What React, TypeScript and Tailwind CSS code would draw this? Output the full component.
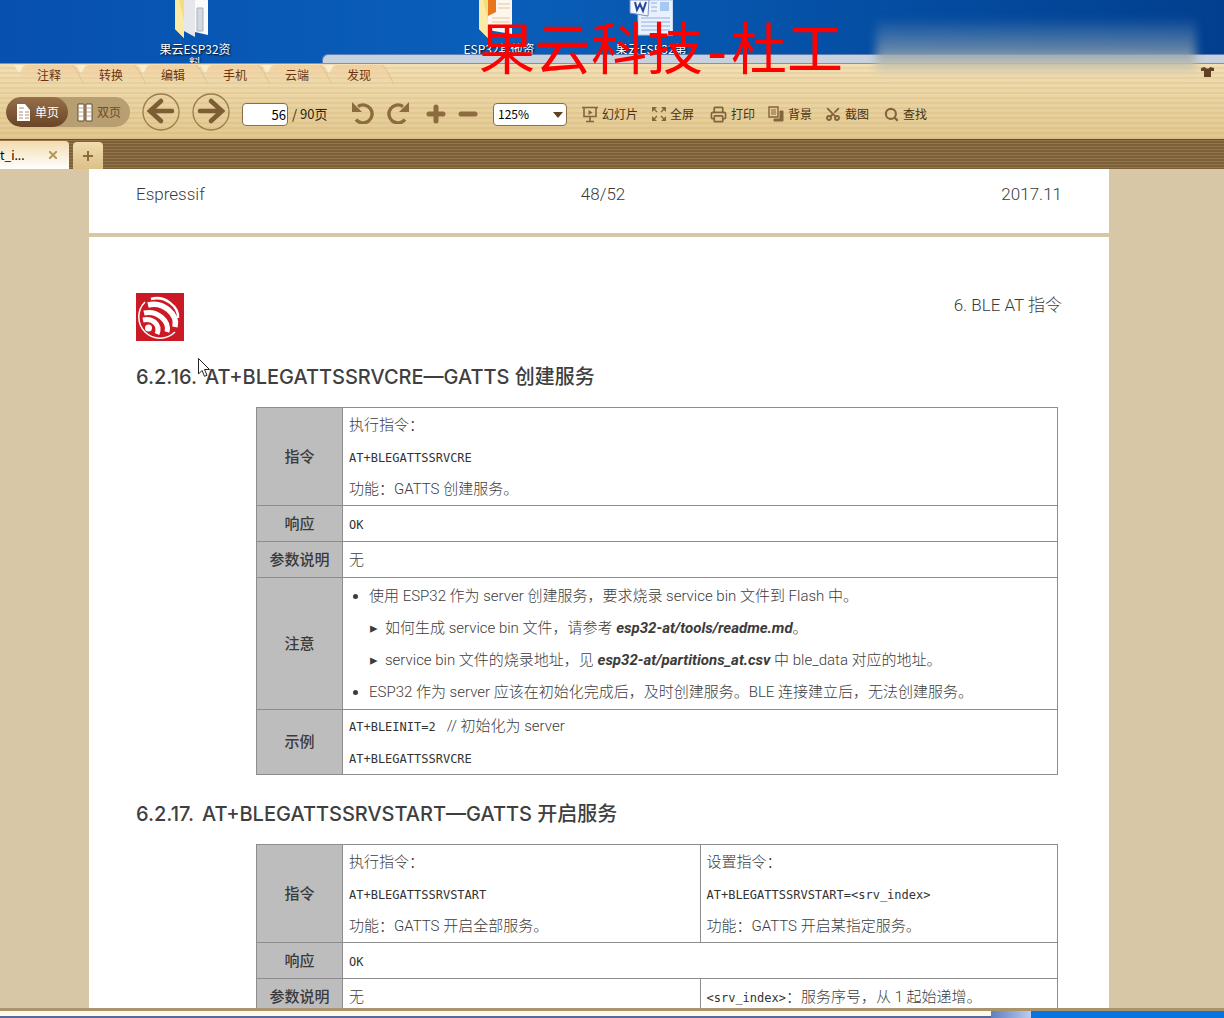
import { Printer, Scissors, Search, Shirt } from "lucide-react";
import type { ReactNode } from "react";

const menuTabs = ["注释", "转换", "编辑", "手机", "云端", "发现"];

interface ToolButtonProps {
  label: string;
  width: string;
  children: ReactNode;
}

function ToolButton({ label, width, children }: ToolButtonProps) {
  return (
    <button className={`flex shrink-0 items-center gap-1 whitespace-nowrap ${width}`}>
      {children}
      {label}
    </button>
  );
}

function MenuTab({ label }: { label: string }) {
  return (
    <button className="relative flex h-[22px] w-[62px] shrink-0 items-center justify-center text-[#6b3410]">
      <svg viewBox="0 0 74 20" className="absolute top-0 -left-1 h-5 w-[74px]">
        <defs>
          <linearGradient id="tab" x1="0" y1="0" x2="0" y2="1">
            <stop offset="0" stopColor="#f3cfa0" />
            <stop offset="1" stopColor="#edd3a2" stopOpacity="0" />
          </linearGradient>
        </defs>
        <path d="M4 20C7 12 6 6 12 1H58C64 6 66 14 70 20Z" fill="url(#tab)" />
        <path d="M58 1C64 6 66 14 70 20" fill="none" stroke="#dcc08c" />
        <path d="M0 1H10L5 9Z" fill="#f9edcf" />
      </svg>
      <span className="relative">{label}</span>
    </button>
  );
}

function Folder({ slides }: { slides?: boolean }) {
  return (
    <svg viewBox="0 0 44 38" className="h-[38px] w-11 shrink-0">
      <path d="M2 0H11V38L2 29Z" fill="#f5dc7c" />
      <path d="M2 0H6L11 20V38L2 29Z" fill="#fbeaa6" />
      {slides ? (
        <>
          <path d="M11 0H35V34L11 30Z" fill="#fbf7ef" />
          <path d="M11 0H19V12L11 16Z" fill="#e8761c" />
          <path d="M21 4H33M21 8H33M15 18H33M15 22H33M15 26H33" stroke="#e9c49c" />
        </>
      ) : (
        <>
          <path d="M11 0H22V37L11 31Z" fill="#e6e7ea" />
          <path d="M22 0H35V35L22 32Z" fill="#fafafa" />
          <path d="M24 8H30V31H24Z" fill="#d3d7de" stroke="#a9b0bd" />
        </>
      )}
    </svg>
  );
}

function WordDoc() {
  return (
    <svg viewBox="0 0 44 38" className="h-[38px] w-11 shrink-0">
      <path d="M9 0H44V35H9Z" fill="#e9f1fc" stroke="#a8c4ec" />
      <path d="M31 2H40V11H31Z" fill="#a9c8f1" />
      <path d="M12 18H41M12 22H41M12 26H41M12 30H41M22 3H28M22 7H28M22 11H28" stroke="#8fb0e0" />
      <path d="M1 0H20L19 16L1 13Z" fill="#f5f7fd" stroke="#7a8fc4" />
      <path d="M6 2L8 10L11 4L14 11L17 2" fill="none" stroke="#25479b" strokeWidth="2" />
    </svg>
  );
}

function DesktopIcon({ className, icon, children }: { className: string; icon: ReactNode; children: ReactNode }) {
  return (
    <div className={`absolute top-0 flex w-24 flex-col items-center ${className}`}>
      {icon}
      <span className="mt-1 text-center text-xs leading-[14px] whitespace-nowrap text-white [text-shadow:1px_1px_2px_#000]">
        {children}
      </span>
    </div>
  );
}

function Desktop() {
  return (
    <div className="relative h-[63px] shrink-0 overflow-hidden bg-linear-to-r from-[#0750b0] via-[#0a5fba] via-40% to-[#023f8f]">
      <DesktopIcon className="left-[147px]" icon={<Folder />}>
        果云ESP32资
        <br />料
      </DesktopIcon>
      <DesktopIcon className="left-[451px]" icon={<Folder slides />}>
        ESP32其他资
      </DesktopIcon>
      <DesktopIcon className="left-[603px]" icon={<WordDoc />}>
        果云ESP32第
      </DesktopIcon>
      <div className="absolute right-0 bottom-0 left-[322px] h-[9px] rounded-tl-md border-t border-l border-[#5f7fae] bg-[#c8d2df]" />
    </div>
  );
}

function Toolbar() {
  return (
    <header className="h-[76px] shrink-0 border-t border-[#b08a58] bg-[#e8d09c] bg-[repeating-linear-gradient(to_bottom,#00000000_0_3px,#b98f4a24_3px_5px),linear-gradient(to_bottom,#f2dfb5,#e2c88f)] text-xs text-[#4a3312]">
      <div className="flex h-5 items-start pl-[18px]">
        {menuTabs.map((tab) => (
          <MenuTab key={tab} label={tab} />
        ))}
        <button aria-label="换肤" className="mt-[3px] mr-[10px] ml-auto text-[#5e4220]">
          <svg viewBox="0 0 13 10" className="h-[10px] w-[13px]" fill="currentColor">
            <path d="M4 0C5 2 8 2 9 0L13 1V4H10V10H3V4H0V1Z" />
          </svg>
        </button>
      </div>

      <div className="flex h-14 items-center pl-[6px]">
        <div className="flex h-[30px] w-[124px] shrink-0 overflow-hidden rounded-full bg-[#b79f72]">
          <button className="flex w-[62px] items-center gap-1 rounded-full bg-linear-to-b from-[#97704a] to-[#6a4526] pl-[10px] text-white">
            <svg viewBox="0 0 15 19" className="h-[19px] w-[15px]">
              <path d="M1 1H9L14 7V18H1Z" fill="#fff" />
              <path d="M3 5H8M3 9H7M9 9H13M3 12H7M9 12H13M3 15H7M9 15H13" stroke="#a98e78" />
            </svg>
            单页
          </button>
          <button className="flex items-center gap-1 pl-[9px] text-[#6d4d22]">
            <svg viewBox="0 0 16 19" className="h-[19px] w-4">
              <path d="M1 1H7V18H1ZM9 1H15V18H9Z" fill="#fff" stroke="#674a2b" />
              <path d="M2 5H6M2 9H6M2 13H6M10 5H14M10 9H14M10 13H14" stroke="#b9a68e" />
            </svg>
            双页
          </button>
        </div>

        <button aria-label="上一页" className="ml-3 shrink-0">
          <svg viewBox="0 0 38 38" className="size-[38px]" fill="none" stroke="#7d5d33">
            <circle cx="19" cy="19" r="18" strokeWidth="1.3" stroke="#9c7c4c" />
            <path d="M30 18H9M19 8L8 18L19 28" strokeWidth="4.6" strokeLinecap="round" />
          </svg>
        </button>
        <button aria-label="下一页" className="ml-3 shrink-0">
          <svg viewBox="0 0 38 38" className="size-[38px]" fill="none" stroke="#7d5d33">
            <circle cx="19" cy="19" r="18" strokeWidth="1.3" stroke="#9c7c4c" />
            <path d="M8 18H29M19 8L30 18L19 28" strokeWidth="4.6" strokeLinecap="round" />
          </svg>
        </button>

        <label className="mt-1 ml-3 flex w-[110px] shrink-0 items-center gap-1 text-[13px] text-[#2f2413]">
          <input
            aria-label="页码"
            defaultValue="56"
            className="h-[23px] w-[46px] rounded-sm border border-[#8a6d44] bg-white pr-px text-right text-black"
          />
          / 90页
        </label>

        <button aria-label="向左旋转" className="shrink-0">
          <svg viewBox="0 0 24 24" className="size-6" fill="none" stroke="#8c6b3e">
            <path d="M6 6.500A9 9 0 1 1 4 19.500" strokeWidth="3.4" />
            <path d="M0 2V12H10Z" fill="#8c6b3e" stroke="none" />
          </svg>
        </button>
        <button aria-label="向右旋转" className="ml-[10px] shrink-0">
          <svg viewBox="0 0 24 24" className="size-6" fill="none" stroke="#8c6b3e">
            <path d="M17 6.500A9 9 0 1 0 19 19.500" strokeWidth="3.4" />
            <path d="M23 2V12H13Z" fill="#8c6b3e" stroke="none" />
          </svg>
        </button>
        <button aria-label="放大" className="mt-1 ml-4 shrink-0">
          <svg viewBox="0 0 20 20" className="size-5" stroke="#8c6b3e" strokeWidth="5" strokeLinecap="round">
            <path d="M10 3V17M3 10H17" />
          </svg>
        </button>
        <button aria-label="缩小" className="mt-1 ml-3 shrink-0">
          <svg viewBox="0 0 20 20" className="size-5" stroke="#8c6b3e" strokeWidth="5" strokeLinecap="round">
            <path d="M3 10H17" />
          </svg>
        </button>

        <div className="relative mt-1 ml-[15px] shrink-0">
          <select
            aria-label="缩放比例"
            className="h-[23px] w-[74px] appearance-none rounded-sm border border-[#8a6d44] bg-white pl-1 text-xs text-black"
          >
            <option>125%</option>
          </select>
          <svg viewBox="0 0 10 6" className="pointer-events-none absolute top-[9px] right-1 h-[6px] w-[10px]">
            <path d="M0 0H10L5 6Z" fill="#5e4220" />
          </svg>
        </div>

        <div className="mt-1 ml-[15px] flex">
          <ToolButton label="幻灯片" width="w-[70px]">
            <svg viewBox="0 0 16 17" className="h-[17px] w-4" fill="none" stroke="#84643a" strokeWidth="1.6">
              <path d="M0 1.5H16M2 2V10.5H14V2M8 11V15M4 15.5H12" />
              <path d="M6.500 4L10.500 6.500L6.500 9Z" fill="#84643a" stroke="none" />
            </svg>
          </ToolButton>
          <ToolButton label="全屏" width="w-[58px]">
            <svg viewBox="0 0 14 14" className="h-[14px] w-[14px]" fill="#84643a" stroke="#84643a" strokeWidth="1.4">
              <path d="M2 2L5 5M12 2L9 5M2 12L5 9M12 12L9 9" />
              <path d="M0 0H5L0 5ZM14 0V5L9 0ZM0 14V9L5 14ZM14 14H9L14 9Z" stroke="none" />
            </svg>
          </ToolButton>
          <ToolButton label="打印" width="w-[58px]">
            <Printer size={17} color="#84643a" strokeWidth={2.4} />
          </ToolButton>
          <ToolButton label="背景" width="w-[57px]">
            <svg viewBox="0 0 16 16" className="size-4" fill="none" stroke="#84643a">
              <path d="M1 1H10V11H1Z" strokeWidth="1.4" />
              <path d="M3 4H8M3 6H8M3 8H8" />
              <path d="M12 5H15V15H6V13H12Z" fill="#84643a" />
            </svg>
          </ToolButton>
          <ToolButton label="截图" width="w-[59px]">
            <Scissors size={16} color="#84643a" strokeWidth={2.8} className="-rotate-90" />
          </ToolButton>
          <ToolButton label="查找" width="w-[50px]">
            <Search size={15} color="#84643a" strokeWidth={3.4} />
          </ToolButton>
        </div>
      </div>
    </header>
  );
}

function TabStrip() {
  return (
    <div className="flex h-[30px] shrink-0 items-end border-t border-[#6a4b22] bg-[repeating-linear-gradient(to_bottom,#94754e_0_1px,#7c6038_1px_3px)]">
      <div className="flex h-7 w-[69px] items-center justify-between rounded-tr bg-linear-to-b from-[#f2dcae] to-white pr-3 text-xs text-black">
        <span>t_i...</span>
        <button aria-label="关闭标签" className="text-[#b39858]">
          <svg viewBox="0 0 8 8" className="size-2" stroke="currentColor" strokeWidth="2">
            <path d="M0 0L8 8M8 0L0 8" />
          </svg>
        </button>
      </div>
      <button aria-label="新建标签" className="ml-1 flex h-[27px] w-[30px] items-center justify-center rounded-t-sm bg-linear-to-b from-[#f0dcae] to-[#dcc087]">
        <svg viewBox="0 0 10 10" className="size-[10px]" stroke="#8c6b3e" strokeWidth="2">
          <path d="M5 0V10M0 5H10" />
        </svg>
      </button>
    </div>
  );
}

function EspressifLogo() {
  return (
    <svg viewBox="0 0 48 48" className="size-12">
      <path d="M0 0H48V48H0Z" fill="#cb1a25" />
      <g fill="none" stroke="#fff">
        <path d="M9 9A20 20 0 1 0 39 39" strokeWidth="1.500" />
        <path d="M15 6C29 2 43 14 42 25" strokeWidth="2.500" />
        <path d="M12 12C27 8 42 21 39 34" strokeWidth="5.500" />
        <path d="M8 20C21 17 34 28 31 39" strokeWidth="5" />
        <path d="M7 27C16 25 25 31 21 41" strokeWidth="5" />
      </g>
      <circle cx="12.500" cy="35" r="3.500" fill="#fff" />
    </svg>
  );
}

function Mono({ children }: { children: ReactNode }) {
  return <code className="font-['DejaVu_Sans_Mono','Liberation_Mono',monospace] text-xs font-normal text-[#333]">{children}</code>;
}

function RowHead({ children }: { children: ReactNode }) {
  return (
    <th scope="row" className="w-[86px] border border-[#8d8d8d] bg-[#bdbdbd] p-0 text-center font-medium text-[#3a3a3a]">
      {children}
    </th>
  );
}

function Cell({ children, colSpan }: { children: ReactNode; colSpan?: number }) {
  return (
    <td colSpan={colSpan} className="border border-[#8d8d8d] px-[6px] py-0">
      {children}
    </td>
  );
}

function SectionTitle({ number, children }: { number: string; children: ReactNode }) {
  return (
    <h2 className="mb-4 flex gap-2 font-['Inter','Noto_Sans_CJK_SC',sans-serif] text-xl leading-7 font-medium text-[#3f3f3f]">
      <span>{number}</span>
      <span>{children}</span>
    </h2>
  );
}

function Document() {
  return (
    <main className="min-h-0 flex-1 overflow-hidden bg-[#d8c7a7] pr-[115px] pl-[89px] font-['Roboto','Noto_Sans_CJK_SC',sans-serif] font-light text-[#3c3c3c]">
      <section className="flex h-16 justify-between bg-white px-[47px] pt-[13px] text-[17px] leading-6">
        <span>Espressif</span>
        <span>48/52</span>
        <span>2017.11</span>
      </section>

      <section className="mt-1 bg-white px-[47px] pt-14">
        <div className="mb-[22px] flex justify-between text-[17px] leading-6">
          <EspressifLogo />
          <span>6. BLE AT 指令</span>
        </div>

        <SectionTitle number="6.2.16.">AT+BLEGATTSSRVCRE—GATTS 创建服务</SectionTitle>
        <div className="mr-1 mb-[25px] ml-[120px]">
          <table className="w-full border-collapse text-[15px] leading-8">
            <tbody>
              <tr className="h-[98px]">
                <RowHead>指令</RowHead>
                <Cell>
                  <p>执行指令：</p>
                  <p><Mono>AT+BLEGATTSSRVCRE</Mono></p>
                  <p>功能：GATTS 创建服务。</p>
                </Cell>
              </tr>
              <tr className="h-9">
                <RowHead>响应</RowHead>
                <Cell><Mono>OK</Mono></Cell>
              </tr>
              <tr className="h-9">
                <RowHead>参数说明</RowHead>
                <Cell>无</Cell>
              </tr>
              <tr className="h-[132px]">
                <RowHead>注意</RowHead>
                <Cell>
                  <ul className="list-disc pl-5">
                    <li>
                      使用 ESP32 作为 server 创建服务，要求烧录 service bin 文件到 Flash 中。
                      <ul className="list-['▸__'] pl-4">
                        <li>如何生成 service bin 文件，请参考 <em className="font-bold">esp32-at/tools/readme.md</em>。</li>
                        <li>service bin 文件的烧录地址，见 <em className="font-bold">esp32-at/partitions_at.csv</em> 中 ble_data 对应的地址。</li>
                      </ul>
                    </li>
                    <li>ESP32 作为 server 应该在初始化完成后，及时创建服务。BLE 连接建立后，无法创建服务。</li>
                  </ul>
                </Cell>
              </tr>
              <tr className="h-[65px]">
                <RowHead>示例</RowHead>
                <Cell>
                  <p><Mono>AT+BLEINIT=2</Mono> &nbsp; // 初始化为 server</p>
                  <p><Mono>AT+BLEGATTSSRVCRE</Mono></p>
                </Cell>
              </tr>
            </tbody>
          </table>
        </div>

        <SectionTitle number="6.2.17.">AT+BLEGATTSSRVSTART—GATTS 开启服务</SectionTitle>
        <div className="mr-1 ml-[120px]">
          <table className="w-full table-fixed border-collapse text-[15px] leading-8">
            <tbody>
              <tr className="h-[98px]">
                <RowHead>指令</RowHead>
                <Cell>
                  <p>执行指令：</p>
                  <p><Mono>AT+BLEGATTSSRVSTART</Mono></p>
                  <p>功能：GATTS 开启全部服务。</p>
                </Cell>
                <Cell>
                  <p>设置指令：</p>
                  <p><Mono>AT+BLEGATTSSRVSTART=&lt;srv_index&gt;</Mono></p>
                  <p>功能：GATTS 开启某指定服务。</p>
                </Cell>
              </tr>
              <tr className="h-9">
                <RowHead>响应</RowHead>
                <Cell colSpan={2}><Mono>OK</Mono></Cell>
              </tr>
              <tr className="h-9">
                <RowHead>参数说明</RowHead>
                <Cell>无</Cell>
                <Cell><Mono>&lt;srv_index&gt;</Mono>：服务序号，从 1 起始递增。</Cell>
              </tr>
            </tbody>
          </table>
        </div>
      </section>
    </main>
  );
}

export default function App() {
  return (
    <div lang="zh-CN" className="relative flex h-screen flex-col overflow-hidden bg-white font-['Noto_Sans_CJK_SC',sans-serif]">
      <Desktop />
      <Toolbar />
      <TabStrip />
      <Document />
      <footer className="flex h-[10px] shrink-0 border-t-3 border-[#ab946c]">
        <div className="w-[81%] border-b-2 border-[#566b9c] bg-[#fff9e8]" />
        <div className="w-10 bg-linear-to-r from-[#5d7fc0] to-[#b9cdee]" />
        <div className="flex-1 bg-[#0874e0]" />
      </footer>

      {/* Watermark over the desktop and toolbar */}
      <div className="pointer-events-none absolute top-5 left-[479px] flex font-['Liberation_Serif','Noto_Sans_CJK_SC',serif] text-[56px] leading-[60px] text-[#fe0000]">
        果云科技<span className="w-7 text-center">-</span>杜工
      </div>
      <div className="absolute top-5 right-7 h-[54px] w-[320px] bg-linear-to-b from-[#1c5da6]/30 via-[#7892ab]/80 via-55% to-[#eed9ac]/90 blur-[5px]" />
      <svg viewBox="0 0 12 19" className="pointer-events-none absolute top-[358px] left-[198px] h-[19px] w-3">
        <path d="M.5.5V16L4 12.500L6.500 18.300L9 17.300L6.500 11.500H11.500Z" fill="#fff" stroke="#222" />
      </svg>
    </div>
  );
}
